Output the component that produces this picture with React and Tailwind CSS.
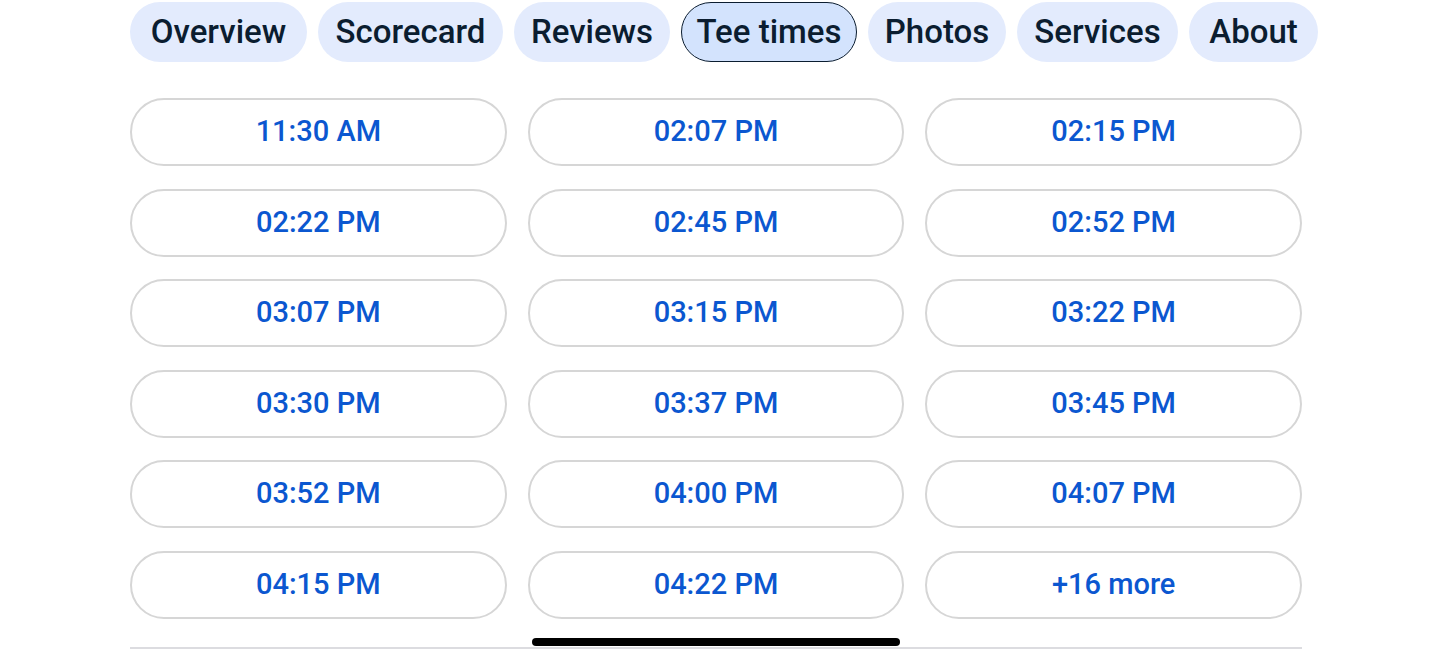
import React from 'react';

const tabs = [
  { label: 'Overview', w: 'w-[177px]' },
  { label: 'Scorecard', w: 'w-[185px]' },
  { label: 'Reviews', w: 'w-[156px]' },
  { label: 'Tee times', w: 'w-[176px]', active: true },
  { label: 'Photos', w: 'w-[138px]' },
  { label: 'Services', w: 'w-[161px]' },
  { label: 'About', w: 'w-[129px]' },
];

const times = [
  '11:30 AM', '02:07 PM', '02:15 PM',
  '02:22 PM', '02:45 PM', '02:52 PM',
  '03:07 PM', '03:15 PM', '03:22 PM',
  '03:30 PM', '03:37 PM', '03:45 PM',
  '03:52 PM', '04:00 PM', '04:07 PM',
  '04:15 PM', '04:22 PM', '+16 more',
];

function Tab({ label, w, active }) {
  return (
    <div
      className={`${w} h-[60px] shrink-0 flex items-center justify-center rounded-full text-[33px] font-medium text-[#0b1d30] ${
        active ? 'bg-[#d3e3fd] border-[1.5px] border-[#0b1d30]' : 'bg-[#e3ebfd]'
      }`}
    >
      {label}
    </div>
  );
}

export default function App() {
  return (
    <div
      className="w-[1431px] h-[658px] bg-white overflow-hidden relative"
      style={{ fontFamily: 'Roboto, "Noto Sans", Arial, sans-serif' }}
    >
      <div className="pl-[130px] pt-[2px]">
        <div className="flex gap-[11px]">
          {tabs.map((t) => (
            <Tab key={t.label} {...t} />
          ))}
        </div>

        <div className="w-[1172px] mt-[36px] grid grid-cols-3 gap-x-[21px] gap-y-[22.5px]">
          {times.map((t) => (
            <div
              key={t}
              className="h-[68px] rounded-full border-2 border-[#d6d6d6] flex items-center justify-center text-[29px] font-medium text-[#0b57d0]"
            >
              {t}
            </div>
          ))}
        </div>

        <div className="w-[1172px] mt-[19px] flex justify-center">
          <div className="w-[368px] h-[8px] rounded-full bg-black" />
        </div>
        <div className="w-[1172px] mt-[1px] h-[2px] bg-[#dcdce0]" />
      </div>
    </div>
  );
}
